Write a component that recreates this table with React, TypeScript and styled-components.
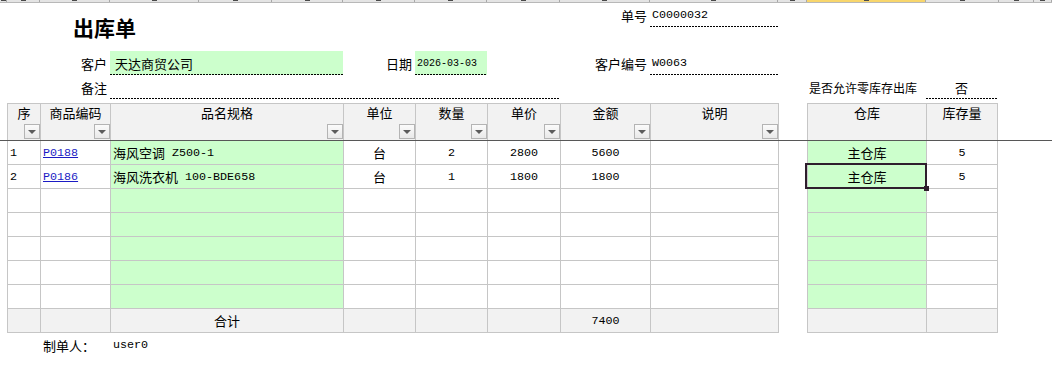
import React from "react";
import styled, { createGlobalStyle, css } from "styled-components";

const GRID = "#c6c6c6";
const GREEN = "#ccffcc";
const HEAD = "#f2f2f2";
const CJK = `"Noto Sans CJK SC", "Noto Sans", sans-serif`;
const MONO = `"Liberation Mono", "Noto Sans CJK SC", monospace`;

const Global = createGlobalStyle`
  html, body { margin: 0; padding: 0; background: #fff; }
  body { font-family: ${CJK}; font-size: 13px; color: #000; }
`;

const Page = styled.div`
  width: 1052px;
  height: 384px;
  display: flex;
  flex-direction: column;
  background: #fff;
  overflow: hidden;
`;

/* ---------- bottom edge of the sheet's column-letter header ---------- */
const stripCols = [7, 33, 70, 89, 73, 71, 72, 72, 73, 90, 128, 29, 119, 73, 35];
const Strip = styled.div`
  display: grid;
  grid-template-columns: ${stripCols.map((w) => `${w}px`).join(" ")} 1fr;
  height: 2px;
  background: #e4e4e4;
  border-bottom: 1px solid #b8b8b8;
`;
const StripCell = styled.div<{ $active?: boolean }>`
  display: flex;
  justify-content: center;
  align-items: flex-start;
  border-right: 1px solid #a8a8a8;
  background: ${(p) => (p.$active ? "#f8d66c" : "transparent")};
  &::after {
    content: "";
    width: 5px;
    height: 1px;
    background: #4a4a4a;
  }
`;

/* ---------- header form ---------- */
const formCols = "7px 33px 70px 233px 72px 72px 73px 90px 128px 29px 119px 71px 1fr";
const Form = styled.div`
  display: grid;
  grid-template-columns: ${formCols};
  grid-template-rows: repeat(4, 24px) 4px;
`;
const Title = styled.h1`
  grid-column: 3 / 5;
  grid-row: 1 / 3;
  margin: 0;
  padding-left: 33px;
  display: flex;
  align-items: center;
  font-family: ${CJK};
  font-size: 21px;
  font-weight: 700;
`;
const Label = styled.div<{ $col: string; $row: string }>`
  grid-column: ${(p) => p.$col};
  grid-row: ${(p) => p.$row};
  display: flex;
  align-items: center;
  justify-content: flex-end;
  padding-right: 3px;
  font-size: 13px;
  white-space: nowrap;
`;
const Note = styled.div<{ $col: string; $row: string }>`
  grid-column: ${(p) => p.$col};
  grid-row: ${(p) => p.$row};
  display: flex;
  align-items: center;
  padding-left: 2px;
  font-size: 12px;
  white-space: nowrap;
`;
const dashes = "repeating-linear-gradient(to right, #000 0 2px, transparent 2px 3px)";
const Field = styled.div<{ $col: string; $row: string; $green?: boolean; $center?: boolean }>`
  grid-column: ${(p) => p.$col};
  grid-row: ${(p) => p.$row};
  display: flex;
  align-items: center;
  justify-content: ${(p) => (p.$center ? "center" : "flex-start")};
  padding-left: ${(p) => (p.$center ? 0 : 2)}px;
  font-size: 13px;
  white-space: nowrap;
  background: ${dashes} left bottom / 100% 1px no-repeat, ${(p) => (p.$green ? GREEN : "transparent")};
`;
const Lat = styled.span`
  font-family: ${MONO};
  font-size: 11.7px;
  white-space: pre;
`;
const DateText = styled.span`
  font-family: ${MONO};
  font-size: 10px;
`;

/* ---------- table ---------- */
const Band = styled.div`
  display: flex;
  gap: 28px;
  padding-left: 7px;
`;
const FreezeLine = styled.div`
  height: 1px;
  background: #575757;
`;
const TableGrid = styled.div<{ $cols: string; $rows: string; $part: "head" | "body" }>`
  display: grid;
  grid-template-columns: ${(p) => p.$cols};
  grid-template-rows: ${(p) => p.$rows};
  gap: 1px;
  background: ${GRID};
  border: 1px solid ${GRID};
  ${(p) => (p.$part === "head" ? "border-bottom: 0;" : "border-top: 0;")}
`;
const HeadCell = styled.div`
  background: ${HEAD};
  display: flex;
  flex-direction: column;
  align-items: center;
  padding-top: 1px;
  font-size: 13px;
  line-height: 15px;
`;
const FilterButton = styled.span`
  align-self: flex-end;
  margin-top: auto;
  margin-bottom: 1px;
  width: 16px;
  height: 15px;
  box-sizing: border-box;
  border: 1px solid #b4b4b4;
  background: linear-gradient(#fbfbfb, #e9e9e9);
  display: flex;
  align-items: center;
  justify-content: center;
  &::after {
    content: "";
    width: 0;
    height: 0;
    border-left: 4px solid transparent;
    border-right: 4px solid transparent;
    border-top: 4px solid #5c5c5c;
  }
`;
type Fill = "white" | "green" | "gray";
const fills: Record<Fill, string> = { white: "#fff", green: GREEN, gray: HEAD };
const BodyCell = styled.div<{ $fill: Fill; $center?: boolean; $selected?: boolean }>`
  background: ${(p) => fills[p.$fill]};
  display: flex;
  align-items: center;
  justify-content: ${(p) => (p.$center ? "center" : "flex-start")};
  padding: 0 2px;
  font-size: 13px;
  white-space: nowrap;
  ${(p) =>
    p.$selected &&
    css`
      position: relative;
      z-index: 1;
      &::before {
        content: "";
        position: absolute;
        left: -3px;
        top: -2px;
        right: -1px;
        bottom: -1px;
        border: 2px solid #2e1e2d;
        pointer-events: none;
      }
      &::after {
        content: "";
        position: absolute;
        right: -3px;
        bottom: -3px;
        width: 5px;
        height: 5px;
        background: #2e1e2d;
      }
    `}
`;
const CodeLink = styled.a`
  font-family: ${MONO};
  font-size: 11.7px;
  color: #1b1bc4;
  text-decoration: underline;
`;

const Footer = styled.div`
  display: grid;
  grid-template-columns: ${formCols};
  grid-template-rows: 24px;
`;
const FooterText = styled.div<{ $col: string }>`
  grid-column: ${(p) => p.$col};
  display: flex;
  align-items: center;
  padding-left: 3px;
  font-size: 13px;
  white-space: nowrap;
`;

function Mixed({ text }: { text: string }) {
  const parts = text.split(/([\x20-\x7e]+)/).filter(Boolean);
  return (
    <>
      {parts.map((p, i) =>
        /^[\x20-\x7e]+$/.test(p) ? <Lat key={i}>{p}</Lat> : <React.Fragment key={i}>{p}</React.Fragment>
      )}
    </>
  );
}

const mainCols = "32px 69px 232px 71px 71px 72px 89px 127px";
const sideCols = "118px 70px";
const mainHeads = ["序", "商品编码", "品名规格", "单位", "数量", "单价", "金额", "说明"];
const sideHeads = ["仓库", "库存量"];
const centered = [false, false, false, true, true, true, true, false];
const empty = ["", "", "", "", "", "", "", ""];
const mainRows: string[][] = [
  ["1", "P0188", "海风空调 Z500-1", "台", "2", "2800", "5600", ""],
  ["2", "P0186", "海风洗衣机 100-BDE658", "台", "1", "1800", "1800", ""],
  empty, empty, empty, empty, empty,
];
const mainTotal = ["", "", "合计", "", "", "", "7400", ""];
const sideRows: string[][] = [
  ["主仓库", "5"],
  ["主仓库", "5"],
  ["", ""], ["", ""], ["", ""], ["", ""], ["", ""],
];

export default function App() {
  return (
    <Page>
      <Global />
      <Strip>
        {stripCols.concat([0]).map((_, i) => (
          <StripCell key={i} $active={i === 12} />
        ))}
      </Strip>

      <Form>
        <Title>出库单</Title>
        <Label $col="8" $row="1">单号</Label>
        <Field $col="9" $row="1"><Lat>C0000032</Lat></Field>
        <Label $col="3" $row="3">客户</Label>
        <Field $col="4" $row="3" $green>&nbsp;天达商贸公司</Field>
        <Label $col="5" $row="3">日期</Label>
        <Field $col="6" $row="3" $green><DateText>2026-03-03</DateText></Field>
        <Label $col="8" $row="3">客户编号</Label>
        <Field $col="9" $row="3"><Lat>W0063</Lat></Field>
        <Label $col="3" $row="4">备注</Label>
        <Field $col="4 / 8" $row="4" />
        <Note $col="11" $row="4">是否允许零库存出库</Note>
        <Field $col="12" $row="4" $center>否</Field>
      </Form>

      <Band>
        <TableGrid $cols={mainCols} $rows="36px" $part="head">
          {mainHeads.map((h) => (
            <HeadCell key={h}>
              {h}
              <FilterButton />
            </HeadCell>
          ))}
        </TableGrid>
        <TableGrid $cols={sideCols} $rows="36px" $part="head">
          {sideHeads.map((h) => (
            <HeadCell key={h}>{h}</HeadCell>
          ))}
        </TableGrid>
      </Band>
      <FreezeLine />
      <Band>
        <TableGrid $cols={mainCols} $rows="repeat(8, 23px)" $part="body">
          {mainRows.map((row, ri) =>
            row.map((c, ci) => (
              <BodyCell key={`${ri}-${ci}`} $fill={ci === 2 ? "green" : "white"} $center={centered[ci]}>
                {ci === 1 && c ? <CodeLink href="#">{c}</CodeLink> : <Mixed text={c} />}
              </BodyCell>
            ))
          )}
          {mainTotal.map((c, ci) => (
            <BodyCell key={`t-${ci}`} $fill="gray" $center>
              <Mixed text={c} />
            </BodyCell>
          ))}
        </TableGrid>
        <TableGrid $cols={sideCols} $rows="repeat(8, 23px)" $part="body">
          {sideRows.map((row, ri) =>
            row.map((c, ci) => (
              <BodyCell
                key={`${ri}-${ci}`}
                $fill={ci === 0 ? "green" : "white"}
                $center
                $selected={ri === 1 && ci === 0}
              >
                <Mixed text={c} />
              </BodyCell>
            ))
          )}
          <BodyCell $fill="gray" />
          <BodyCell $fill="gray" />
        </TableGrid>
      </Band>

      <Footer>
        <FooterText $col="3">制单人：</FooterText>
        <FooterText $col="4"><Lat>user0</Lat></FooterText>
      </Footer>
    </Page>
  );
}
